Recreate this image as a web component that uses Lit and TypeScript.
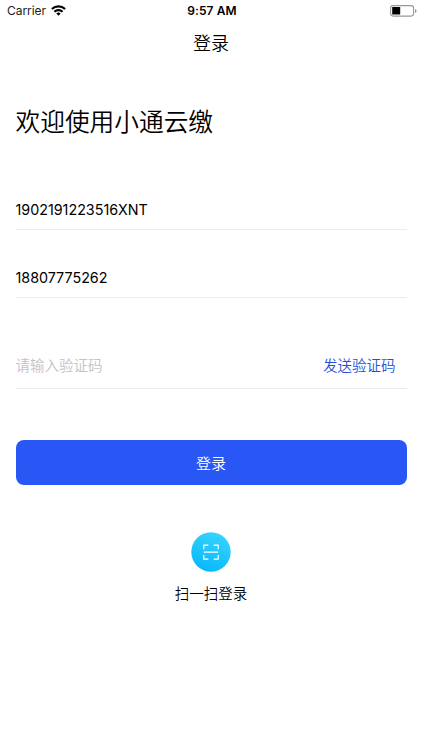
import { LitElement, html, css } from "lit";
import { customElement } from "lit/decorators.js";

@customElement("app-root")
export class AppRoot extends LitElement {
  static styles = css`
    :host { display: block; width: 422px; height: 750px; background: #fff; color: #000; overflow: hidden; font-family: Inter, "Noto Sans CJK SC", sans-serif; }
    * { box-sizing: border-box; }
    .status { height: 22px; display: grid; grid-template-columns: 1fr auto 1fr; align-items: center; padding: 0 5px 0 7px; font-size: 12px; line-height: 22px; }
    .carrier { display: flex; align-items: center; gap: 5px; letter-spacing: -.05px; color: #222; }
    .carrier svg { display: block; margin-bottom: 1px; }
    .time { font-weight: 600; letter-spacing: .1px; }
    .battery { justify-self: end; display: block; }
    .nav { height: 42px; line-height: 44px; text-align: center; font-size: 18px; font-weight: 350; }
    .content { padding: 0 15.5px; display: flex; flex-direction: column; }
    h1 { margin: 38px 0 0; height: 40px; line-height: 40px; font-size: 24.7px; font-weight: 350; }
    .field { height: 68px; display: flex; justify-content: space-between; align-items: flex-end; border-bottom: 1px solid #ececec; font-size: 14.3px; line-height: 20px; padding-bottom: 9px; }
    .first { margin-top: 20px; }
    .code { height: 91px; padding-bottom: 12px; font-size: 14.5px; font-weight: 350; }
    .hint { color: #c2c2c7; }
    .send { color: #2450d8; padding-right: 11px; }
    .login { margin-top: 51px; height: 45px; border: 0; border-radius: 8px; background: #2857f6; color: #fff; font: inherit; font-size: 15px; font-weight: 350; }
    .scan { margin-top: 47px; display: flex; flex-direction: column; align-items: center; gap: 12px; font-size: 14.5px; line-height: 20px; font-weight: 350; }
    .scan svg { display: block; }
  `;
  render() {
    return html`
      <div class="status">
        <div class="carrier"><span>Carrier</span>
          <svg width="15" height="11" viewBox="0 0 15 11" fill="none" stroke="#000" stroke-width="2.1"><path d="M.9 4.1a9.3 9.3 0 0 1 13.2 0M3.4 6.8a5.8 5.8 0 0 1 8.2 0"/><path d="M7.5 10.8L5.3 8.6a3.1 3.1 0 0 1 4.4 0z" fill="#000" stroke="none"/></svg>
        </div>
        <span class="time">9:57 AM</span>
        <svg class="battery" width="27" height="12" viewBox="0 0 27 12"><rect x=".6" y=".6" width="23" height="10.5" rx="2.5" fill="none" stroke="#999" stroke-width="1.1"/><rect x="2.2" y="2.1" width="8" height="7.5" rx=".5"/><path d="M25 4q1.6.5 1.6 2T25 8z" fill="#999"/></svg>
      </div>
      <div class="nav">登录</div>
      <div class="content">
        <h1>欢迎使用小通云缴</h1>
        <div class="field first"><span>1902191223516XNT</span></div>
        <div class="field"><span>18807775262</span></div>
        <div class="field code"><span class="hint">请输入验证码</span><span class="send">发送验证码</span></div>
        <button class="login">登录</button>
        <div class="scan">
          <svg width="40" height="40" viewBox="0 0 40 40"><defs><linearGradient id="g" x1="0.7" y1="0" x2="0.3" y2="1"><stop stop-color="#37d4fb"/><stop offset="1" stop-color="#08b7fb"/></linearGradient></defs><circle cx="20" cy="20" r="19.7" fill="url(#g)"/><path d="M12.8 17.3v-4.2h4.5M22.7 13.1h4.5v4.2M27.2 23v4.2h-4.5M17.3 27.2h-4.5V23M12.8 20.2h14.4" fill="none" stroke="#fff" stroke-width="1.2"/></svg>
          <span>扫一扫登录</span>
        </div>
      </div>`;
  }
}
